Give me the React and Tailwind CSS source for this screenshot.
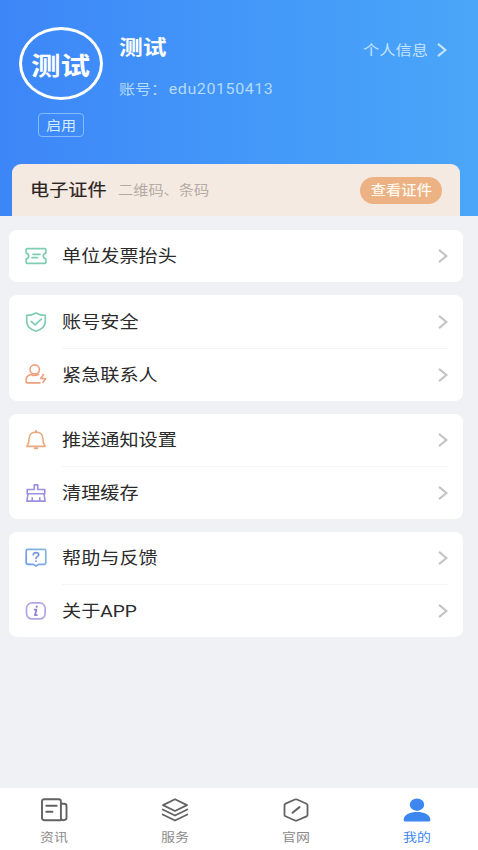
import { clsx } from 'clsx'

const svgBase = { fill: 'none', strokeLinecap: 'round', strokeLinejoin: 'round' }

const ORIGINS = {
  left: 'origin-left',
  center: 'origin-center',
  right: 'origin-right',
}

function Wide({ origin = 'left', className, children }) {
  return (
    <span className={clsx('inline-block scale-x-[1.16] whitespace-nowrap', ORIGINS[origin], className)}>
      {children}
    </span>
  )
}

function Chevron({ className }) {
  return (
    <svg viewBox="0 0 10 14" className={clsx('h-[14px] w-[10px] shrink-0', className)} fill="none" stroke="currentColor" strokeWidth="2.1">
      <path d="M1 .9 8.4 7 1 13.1" />
    </svg>
  )
}

function TicketIcon() {
  return (
    <svg viewBox="0 0 22 20" className="h-5 w-[22px]" {...svgBase} stroke="#7fcdb4" strokeWidth="1.7">
      <path d="M2 2.700h18a.8.8 0 0 1 .8.8v3.700c-3.300.7-3.300 4.900 0 5.600v3.700a.8.8 0 0 1-.8.8H2a.8.8 0 0 1-.8-.8v-3.700c3.300-.7 3.300-4.900 0-5.600V3.500A.8.8 0 0 1 2 2.700Z" />
      <path d="M8 8.300h7M7 11.700h5.500" />
    </svg>
  )
}

function ShieldIcon() {
  return (
    <svg viewBox="0 0 22 20" className="h-5 w-[22px]" {...svgBase} stroke="#7fcdb4" strokeWidth="1.7">
      <path d="M11 .9c3 1.700 5.700 2.400 9.300 2.400v6.200c0 4.700-3.700 7.900-9.300 9.700-5.600-1.800-9.300-5-9.300-9.700V3.300C5.300 3.300 8 2.600 11 .9Z" />
      <path d="m6.300 9.500 3.900 3.300 6.100-5.600" />
    </svg>
  )
}

function ContactIcon() {
  return (
    <svg viewBox="0 0 22 20" className="h-5 w-[22px]" {...svgBase} stroke="#eda07d" strokeWidth="1.6">
      <ellipse cx="9.700" cy="5.400" rx="4.700" ry="4.500" />
      <path d="M15 18.900H2.200c-.7 0-1.100-.4-1.100-1v-1.700c0-3.100 2-5.100 5-5.700 1.800 1.100 5.300 1.100 7.300 0" />
      <path d="m18.400 10.500-2.600 4h4.800l-2.700 4" />
    </svg>
  )
}

function BellIcon() {
  return (
    <svg viewBox="0 0 22 20" className="h-5 w-[22px]" {...svgBase} stroke="#e9a981" strokeWidth="1.6">
      <path d="M11 2.100c-4.200 0-6.800 2.700-6.800 6.100 0 3.700-.5 5.500-2.300 8.200h18.200c-1.800-2.700-2.300-4.500-2.300-8.200 0-3.400-2.600-6.100-6.800-6.100Z" />
      <path d="M11 1v1.200M9.600 18.300h2.800" strokeWidth="2" />
    </svg>
  )
}

function BroomIcon() {
  return (
    <svg viewBox="0 0 22 20" className="h-5 w-[22px]" {...svgBase} stroke="#9a8fe0" strokeWidth="1.6">
      <path d="M9.300 6.500V1.900h3.400v4.600h7.100v4.200H2.200V6.500h7.100Z" />
      <path d="M3 10.700 1.900 18.100h18.200L19 10.700M7.200 17.800v-3.100M14.800 17.800v-3.100" />
    </svg>
  )
}

function HelpIcon() {
  return (
    <svg viewBox="0 0 22 20" className="h-5 w-[22px]" {...svgBase} stroke="url(#help-line)" strokeWidth="1.7">
      <defs>
        <linearGradient id="help-line" gradientUnits="userSpaceOnUse" x1="0" y1="20" x2="22" y2="0">
          <stop stopColor="#6496e2" />
          <stop offset=".5" stopColor="#7caae4" />
          <stop offset="1" stopColor="#87bbe2" />
        </linearGradient>
      </defs>
      <path d="M2.800 1.300h16.400c1 0 1.600.6 1.600 1.500v12c0 .9-.6 1.500-1.600 1.500h-5.400L11 18.100l-2.800-1.800H2.800c-1 0-1.600-.6-1.600-1.500v-12c0-.9.6-1.500 1.600-1.500Z" />
      <path d="M8.300 6.800c.1-1.400 1.200-2.100 2.700-2.100s2.700.8 2.700 2.100c0 1.800-2.700 1.800-2.700 3.600M11 13v.2" stroke="#7593df" />
    </svg>
  )
}

function InfoIcon() {
  return (
    <svg viewBox="0 0 22 20" className="h-5 w-[22px]" {...svgBase} stroke="#b3a6e0" strokeWidth="1.7">
      <rect x="1.500" y="1.900" width="18.700" height="16" rx="5.500" />
      <path d="M9.600 8.700h1.900l-1.600 5.500h1.900" stroke="#937fd4" />
      <path d="M11.700 5.600v.1" stroke="#937fd4" strokeWidth="2.200" />
    </svg>
  )
}

function NewsIcon() {
  return (
    <svg viewBox="0 0 28 24" className="h-6 w-7" {...svgBase} stroke="#626262" strokeWidth="1.9">
      <path d="M21 22.200H4.300c-1.500 0-2.300-.8-2.300-2.100V3.300C2 2 2.800 1.200 4.300 1.200h14.300c1.500 0 2.300.8 2.300 2.100v16.800c0 1.300.7 2.100 2.500 2.100s3.100-.8 3.100-2.100V7.900c0-1.300-.7-2.100-2.200-2.100h-3.200" />
      <path d="M6.300 7.700h10.400M6.300 13.700h6.200" />
    </svg>
  )
}

function LayersIcon() {
  return (
    <svg viewBox="0 0 28 24" className="h-6 w-7" {...svgBase} stroke="#626262" strokeWidth="1.8">
      <path d="M14 1.200 26 7.100l-12 5.900L2 7.100 14 1.200Z" />
      <path d="m1.700 11.500 12.300 6 12.300-6M1.700 16.500l12.300 6 12.300-6" />
    </svg>
  )
}

function SiteIcon() {
  return (
    <svg viewBox="0 0 28 24" className="h-6 w-7" {...svgBase} stroke="#626262" strokeWidth="1.8">
      <path d="M13 1.500c.7-.3 1.300-.3 2 0l9.500 4.200c.7.300 1 .8 1 1.400v9.800c0 .6-.3 1.100-1 1.400L15 22.500c-.7.300-1.300.3-2 0l-9.500-4.200c-.7-.3-1-.8-1-1.400V7.100c0-.6.3-1.100 1-1.400L13 1.500Z" />
      <path d="m10.500 14.800 7-5.700" strokeWidth="2" />
    </svg>
  )
}

function MineIcon() {
  return (
    <svg viewBox="0 0 28 24" className="h-6 w-7" fill="#3b86ef">
      <ellipse cx="14" cy="6.700" rx="7.200" ry="6.200" />
      <path d="M.7 21c1-4.500 6.200-6.900 13.300-6.900S26.300 16.500 27.300 21c.3 1.700-.5 2.600-2.300 2.600H3C1.200 23.600.4 22.700.7 21Z" />
    </svg>
  )
}

const GROUPS = [
  [{ label: '单位发票抬头', Icon: TicketIcon }],
  [
    { label: '账号安全', Icon: ShieldIcon },
    { label: '紧急联系人', Icon: ContactIcon },
  ],
  [
    { label: '推送通知设置', Icon: BellIcon },
    { label: '清理缓存', Icon: BroomIcon },
  ],
  [
    { label: '帮助与反馈', Icon: HelpIcon },
    { label: '关于APP', Icon: InfoIcon },
  ],
]

const TABS = [
  { label: '资讯', Icon: NewsIcon },
  { label: '服务', Icon: LayersIcon },
  { label: '官网', Icon: SiteIcon },
  { label: '我的', Icon: MineIcon, active: true },
]

function MenuRow({ label, Icon, divided }) {
  return (
    <button type="button" className="flex h-[52.6px] w-full items-center pl-4 text-left">
      <Icon />
      <span
        className={clsx(
          'mr-[15px] ml-[15px] flex h-full flex-1 items-center justify-between',
          divided && 'border-t border-[#f5f5f6]',
        )}
      >
        <Wide className="pt-[3px] text-[16.5px] text-[#2b2b2b]">{label}</Wide>
        <Chevron className="text-[#c4c4c4]" />
      </span>
    </button>
  )
}

export default function App() {
  return (
    <div className="flex h-[850px] w-full flex-col overflow-hidden bg-[#eff1f4] font-['Roboto','Noto_Sans_CJK_SC',sans-serif]">
      <header className="flex h-[216px] shrink-0 flex-col justify-between bg-linear-to-r from-[#3d86f8] via-[#4397f9] to-[#4aa6f8]">
        <div className="flex pt-[27px] pr-[31px] pl-[19px]">
          <div className="flex w-[84px] flex-col items-center">
            <div className="grid h-[73px] w-[84px] place-items-center rounded-[50%] border-3 border-white pt-[6px]">
              <Wide origin="center" className="text-[25.5px] leading-none font-bold text-white">测试</Wide>
            </div>
            <div className="mt-[13px] grid h-6 w-[46px] place-items-center rounded-[4px] border border-[#84bcfb]">
              <Wide origin="center" className="text-[13px] leading-none text-[#d3eaff]">启用</Wide>
            </div>
          </div>
          <div className="ml-[15.5px] flex-1 pt-[7px]">
            <p className="leading-7">
              <Wide className="text-[20.5px] font-bold text-white">测试</Wide>
            </p>
            <p className="mt-[15px] leading-5 text-[#b4dafe]">
              <Wide className="text-[13.8px]">
                账号：<span className="ml-[1.5px] tracking-[0.5px]">edu20150413</span>
              </Wide>
            </p>
          </div>
          <div className="flex h-[46px] items-center gap-[9px] text-[#c6e4ff]">
            <Wide origin="right" className="text-[14px]">个人信息</Wide>
            <Chevron />
          </div>
        </div>

        <section className="mr-[18px] ml-3 flex h-[52px] items-center rounded-t-[9px] bg-[#f5eae2] pr-[18px] pl-[18px]">
          <Wide className="pt-[3px] text-[16.5px] text-[#2b2522] [-webkit-text-stroke:0.2px]">电子证件</Wide>
          <Wide className="ml-[21.5px] pt-[2px] text-[13.1px] text-[#b5aaa3]">二维码、条码</Wide>
          <button type="button" className="ml-auto grid h-[27px] w-[82px] place-items-center rounded-full bg-[#edb284] pt-px">
            <Wide origin="center" className="text-[13.2px] leading-none font-medium text-[#fff8ef]">查看证件</Wide>
          </button>
        </section>
      </header>

      <main className="flex flex-1 flex-col gap-[13px] pt-[13.9px] pr-[15px] pl-[9px]">
        {GROUPS.map((rows) => (
          <section key={rows[0].label} className="rounded-[8px] bg-white">
            {rows.map((row, i) => (
              <MenuRow key={row.label} {...row} divided={i > 0} />
            ))}
          </section>
        ))}
      </main>

      <nav className="flex h-[62.5px] shrink-0 bg-white">
        <div className="-ml-[6.5px] flex shrink-0">
          {TABS.map(({ label, Icon, active }) => (
            <button key={label} type="button" className="flex w-[121px] flex-col items-center pt-[10.5px]">
              <Icon />
              <Wide origin="center" className={clsx('mt-[9.5px] text-[12px] leading-none', active ? 'text-[#3b86ef]' : 'text-[#8a8a8a]')}>
                {label}
              </Wide>
            </button>
          ))}
        </div>
      </nav>
    </div>
  )
}
